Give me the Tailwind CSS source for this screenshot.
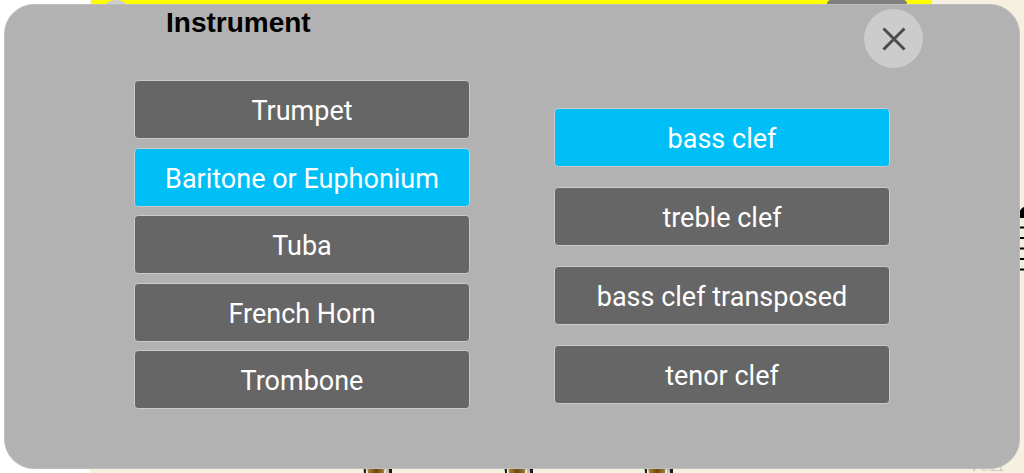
<!DOCTYPE html>
<html lang="en">
<head>
<meta charset="utf-8">
<meta name="viewport" content="width=device-width, initial-scale=1">
<title>Instrument</title>
<script src="https://cdn.jsdelivr.net/npm/@tailwindcss/browser@4"></script>
</head>
<body>
<div class="relative isolate min-h-screen overflow-hidden bg-white p-1 font-['Roboto',sans-serif]">

  <!-- Game screen behind the dialog -->
  <div class="absolute inset-y-0 left-[90px] right-0 -z-10 bg-[#f5f0df]" aria-hidden="true">
    <div class="absolute left-px right-[92px] top-0 h-10 bg-[#ffff00]"></div>
    <div class="absolute left-[10px] top-0 size-8 rounded-full bg-[#cccccc]"></div>
    <div class="absolute right-[117px] top-0 h-10 w-20 rounded-sm bg-[#808080]"></div>
    <svg class="absolute right-0 top-[200px] h-[80px] w-3" viewBox="0 0 12 80">
      <path d="M7 17C7 11 9 8 12 7V17Z"/>
      <path d="M0 17H12M0 27.500H12M0 38H12M0 48.500H12M0 59H12M0 69.500H12" stroke="#000" stroke-width="2"/>
    </svg>
    <svg class="absolute bottom-0 left-[272px] h-[10px] w-[312px]" viewBox="0 0 312 10">
      <defs>
        <linearGradient id="brass">
          <stop offset="0" stop-color="#c4b27a"/>
          <stop offset=".15" stop-color="#a07c26"/>
          <stop offset=".5" stop-color="#6b4710"/>
          <stop offset=".85" stop-color="#94782c"/>
          <stop offset="1" stop-color="#c9c0a0"/>
        </linearGradient>
        <g id="valve">
          <path d="M1 0H4V10H2Z" fill="#222"/>
          <path d="M4 0H24L22 10H6Z" fill="url(#brass)"/>
          <path d="M24 0H26V10H24Z" fill="#bbb"/>
          <path d="M26 0H30V10H27Z" fill="#181818"/>
        </g>
      </defs>
      <use href="#valve"/>
      <use href="#valve" x="141"/>
      <use href="#valve" x="281"/>
    </svg>
    <span class="absolute bottom-0 right-5 font-['Liberation_Sans',sans-serif] text-xs leading-3 text-[#c8c4b8]">v 0.21</span>
  </div>

  <main role="dialog" aria-labelledby="title" class="min-h-[465px] rounded-[30px] border border-[#bebebe] bg-[#b2b2b2]">
    <header class="flex h-[75px] items-start justify-between pl-[161px] pr-24 pt-1">
      <h1 id="title" class="font-['Liberation_Sans',sans-serif] text-[28px] font-bold leading-7 text-black">Instrument</h1>
      <button type="button" aria-label="Close" class="flex size-[59px] shrink-0 items-center justify-center rounded-full bg-[#cccccc]">
        <svg class="size-6" viewBox="0 0 24 24" fill="none" stroke="#4c4c4c" stroke-width="3" stroke-linecap="butt"><path d="M1.500 1.500L22.500 22.500M22.500 1.500L1.500 22.500"/></svg>
      </button>
    </header>

    <div class="grid grid-cols-2 gap-[84px] px-[129px]">
      <div class="flex h-[329px] flex-col justify-between" role="group" aria-label="Instrument">
        <button type="button" class="h-[59px] rounded border border-[#cacaca] bg-[#666666] pt-1 text-[27px] text-white">Trumpet</button>
        <button type="button" aria-pressed="true" class="h-[59px] rounded border border-[#cacaca] bg-[#00bff7] pt-1 text-[27px] text-white">Baritone or Euphonium</button>
        <button type="button" class="h-[59px] rounded border border-[#cacaca] bg-[#666666] pt-1 text-[27px] text-white">Tuba</button>
        <button type="button" class="h-[59px] rounded border border-[#cacaca] bg-[#666666] pt-1 text-[27px] text-white">French Horn</button>
        <button type="button" class="h-[59px] rounded border border-[#cacaca] bg-[#666666] pt-1 text-[27px] text-white">Trombone</button>
      </div>
      <div class="flex flex-col gap-5 pt-7" role="group" aria-label="Clef">
        <button type="button" aria-pressed="true" class="h-[59px] rounded border border-[#cacaca] bg-[#00bff7] pt-1 text-[27px] text-white">bass clef</button>
        <button type="button" class="h-[59px] rounded border border-[#cacaca] bg-[#666666] pt-1 text-[27px] text-white">treble clef</button>
        <button type="button" class="h-[59px] rounded border border-[#cacaca] bg-[#666666] pt-1 text-[27px] text-white">bass clef transposed</button>
        <button type="button" class="h-[59px] rounded border border-[#cacaca] bg-[#666666] pt-1 text-[27px] text-white">tenor clef</button>
      </div>
    </div>
  </main>
</div>
</body>
</html>
